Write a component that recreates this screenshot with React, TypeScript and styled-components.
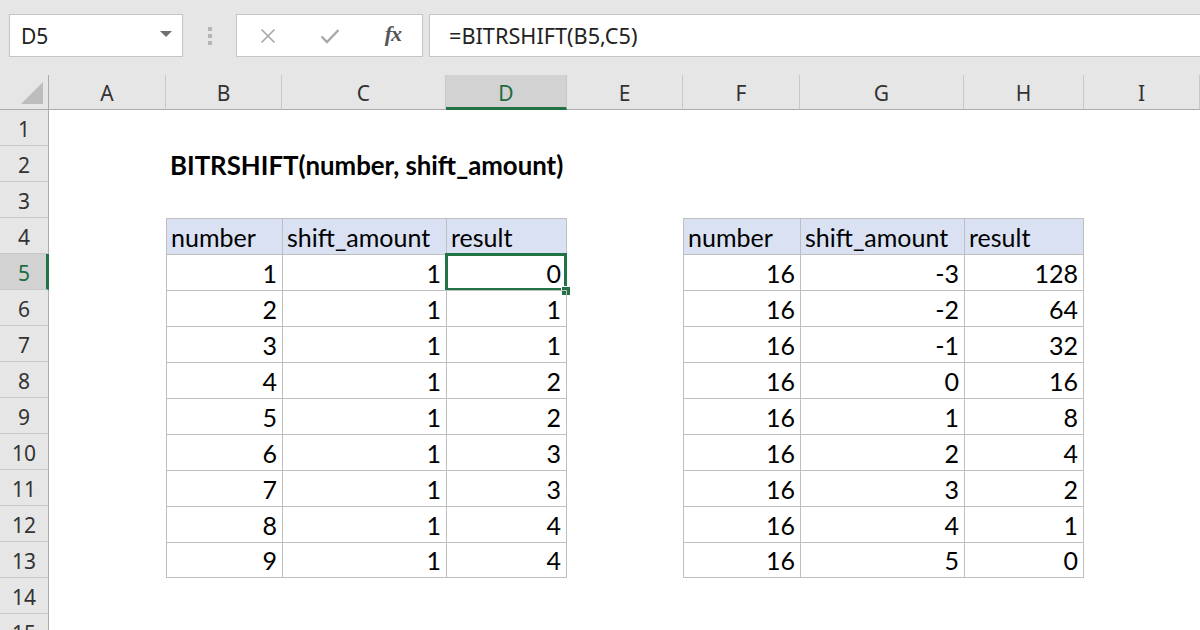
import React from "react";
import styled, { createGlobalStyle, css } from "styled-components";

const GlobalStyle = createGlobalStyle`
  html, body { margin: 0; padding: 0; background: #ffffff; overflow: hidden; }
  * { box-sizing: border-box; }
`;

const UI_FONT = `"Noto Sans", "Open Sans", sans-serif`;
const CELL_FONT = `Lato, "Liberation Sans", sans-serif`;
const GREEN = "#217346";
const TABLE_LINE = "#bfbfbf";

const Page = styled.div`
  width: 1200px;
  height: 630px;
  overflow: hidden;
  display: flex;
  flex-direction: column;
`;

const FormulaBar = styled.div`
  height: 75px;
  flex: none;
  background: #e6e6e6;
  display: flex;
  align-items: flex-start;
  padding: 14px 0 0 9px;
`;

const Box = styled.div`
  height: 43px;
  background: #ffffff;
  border: 1px solid #c6c6c6;
  display: flex;
  align-items: center;
`;

const NameBox = styled(Box)`
  width: 174px;
  padding: 0 10px 0 11px;
  justify-content: space-between;
  font-family: ${UI_FONT};
  font-size: 21px;
  color: #222;
`;

const Caret = styled.span`
  width: 0;
  height: 0;
  border-left: 6px solid transparent;
  border-right: 6px solid transparent;
  border-top: 6px solid #6f6f6f;
  margin-top: -4px;
`;

const Grip = styled.div`
  width: 53px;
  height: 43px;
  display: flex;
  flex-direction: column;
  align-items: center;
  justify-content: center;
  gap: 3px;
  span {
    width: 4px;
    height: 4px;
    background: #b4b4b4;
  }
`;

const FxButtons = styled(Box)`
  width: 187px;
  justify-content: space-between;
  padding: 0 21px 0 23px;
`;

const FxLabel = styled.span`
  font-family: "Liberation Serif", serif;
  font-style: italic;
  font-weight: bold;
  font-size: 22px;
  color: #555;
  letter-spacing: -1px;
  margin-top: -3px;
`;

const FormulaInput = styled(Box)`
  flex: 1;
  margin-left: 6px;
  margin-right: -4px;
  padding-left: 19px;
  font-family: ${UI_FONT};
  font-size: 21.7px;
  color: #222;
`;

const COLS = [49, 117, 116, 164, 121, 116, 117, 164, 120, 116];
const LETTERS = ["A", "B", "C", "D", "E", "F", "G", "H", "I"];

const Sheet = styled.div`
  display: grid;
  grid-template-columns: ${COLS.map((c) => `${c}px`).join(" ")};
  grid-template-rows: 35px repeat(15, 36px);
`;

const Corner = styled.div`
  background: #e6e6e6;
  border-right: 1px solid #ababab;
  border-bottom: 1px solid #ababab;
  position: relative;
  &::after {
    content: "";
    position: absolute;
    right: 5px;
    bottom: 5px;
    width: 0;
    height: 0;
    border-left: 22px solid transparent;
    border-bottom: 22px solid #bdbdbd;
  }
`;

const ColHeader = styled.div<{ $selected?: boolean }>`
  background: ${(p) => (p.$selected ? "#d2d2d2" : "#e6e6e6")};
  border-right: 1px solid #c8c8c8;
  border-bottom: ${(p) => (p.$selected ? `3px solid ${GREEN}` : "1px solid #ababab")};
  display: flex;
  align-items: center;
  justify-content: center;
  padding-top: ${(p) => (p.$selected ? "3px" : "1px")};
  font-family: ${UI_FONT};
  font-size: 21px;
  color: ${(p) => (p.$selected ? "#1e6b41" : "#333")};
`;

const RowHeader = styled.div<{ $selected?: boolean }>`
  background: ${(p) => (p.$selected ? "#d2d2d2" : "#e6e6e6")};
  border-bottom: 1px solid #c8c8c8;
  border-right: ${(p) => (p.$selected ? `3px solid ${GREEN}` : "1px solid #ababab")};
  display: flex;
  align-items: center;
  justify-content: center;
  padding-left: ${(p) => (p.$selected ? "2px" : "0")};
  padding-top: 3px;
  font-family: ${UI_FONT};
  font-size: 21px;
  color: ${(p) => (p.$selected ? "#1e6b41" : "#333")};
`;

type Kind = "empty" | "head" | "data";

const Cell = styled.div<{
  $kind: Kind;
  $last?: boolean;
  $bottom?: boolean;
}>`
  position: relative;
  display: flex;
  align-items: flex-end;
  padding: 0 5px 4px 5px;
  font-family: ${CELL_FONT};
  font-size: 25px;
  line-height: 1;
  color: #000;
  white-space: nowrap;
  ${(p) =>
    p.$kind !== "empty" &&
    css`
      border-top: 1px solid ${TABLE_LINE};
      border-left: 1px solid ${TABLE_LINE};
      ${p.$last && `border-right: 1px solid ${TABLE_LINE};`}
      ${p.$bottom && `border-bottom: 1px solid ${TABLE_LINE};`}
    `}
  ${(p) =>
    p.$kind === "head" &&
    css`
      background: #d9e1f2;
      justify-content: flex-start;
      padding-left: 4px;
    `}
  ${(p) =>
    p.$kind === "data" &&
    css`
      justify-content: flex-end;
    `}
`;

const Title = styled.div`
  grid-column: span 3;
  display: flex;
  align-items: flex-end;
  padding: 0 0 3px 4px;
  font-family: ${CELL_FONT};
  font-weight: bold;
  font-size: 25.8px;
  line-height: 1;
  color: #000;
  white-space: nowrap;
`;

const Selection = styled.div`
  position: absolute;
  top: -2px;
  left: -2px;
  right: -1px;
  bottom: -1px;
  border: 3px solid ${GREEN};
  pointer-events: none;
`;

const FillHandle = styled.div`
  position: absolute;
  right: -6px;
  bottom: -7px;
  width: 9px;
  height: 9px;
  background: ${GREEN};
  border-left: 1px solid #fff;
  border-top: 1px solid #fff;
`;

const t1Result = [0, 1, 1, 2, 2, 3, 3, 4, 4];
const t2Shift = [-3, -2, -1, 0, 1, 2, 3, 4, 5];
const t2Result = [128, 64, 32, 16, 8, 4, 2, 1, 0];

function cellContent(row: number, col: number): { kind: Kind; text?: string; last?: boolean; bottom?: boolean } {
  const inT1 = col >= 1 && col <= 3;
  const inT2 = col >= 5 && col <= 7;
  if ((inT1 || inT2) && row >= 4 && row <= 13) {
    const idx = inT1 ? col - 1 : col - 5;
    const last = idx === 2;
    const bottom = row === 13;
    if (row === 4) {
      return { kind: "head", text: ["number", "shift_amount", "result"][idx], last, bottom };
    }
    const i = row - 5;
    const text = inT1 ? String([i + 1, 1, t1Result[i]][idx]) : String([16, t2Shift[i], t2Result[i]][idx]);
    return { kind: "data", text, last, bottom };
  }
  return { kind: "empty" };
}

const XIcon = () => (
  <svg width="16" height="16" viewBox="0 0 16 16">
    <path d="M1.5 1.5 L14.5 14.5 M14.5 1.5 L1.5 14.5" stroke="#a8a8a8" strokeWidth="1.6" fill="none" />
  </svg>
);

const CheckIcon = () => (
  <svg width="20" height="16" viewBox="0 0 20 16">
    <path d="M1.5 8.5 L7 14 L18.5 2" stroke="#a8a8a8" strokeWidth="2.4" fill="none" />
  </svg>
);

export default function App() {
  const rows = Array.from({ length: 15 }, (_, i) => i + 1);
  return (
    <Page>
      <GlobalStyle />
      <FormulaBar>
        <NameBox>
          <span>D5</span>
          <Caret />
        </NameBox>
        <Grip>
          <span />
          <span />
          <span />
        </Grip>
        <FxButtons>
          <XIcon />
          <CheckIcon />
          <FxLabel>fx</FxLabel>
        </FxButtons>
        <FormulaInput>=BITRSHIFT(B5,C5)</FormulaInput>
      </FormulaBar>
      <Sheet>
        <Corner />
        {LETTERS.map((l) => (
          <ColHeader key={l} $selected={l === "D"}>
            {l}
          </ColHeader>
        ))}
        {rows.map((r) => (
          <React.Fragment key={r}>
            <RowHeader $selected={r === 5}>{r}</RowHeader>
            {r === 2 ? (
              <>
                <Cell $kind="empty" />
                <Title>BITRSHIFT(number, shift_amount)</Title>
                {[4, 5, 6, 7, 8].map((c) => (
                  <Cell key={c} $kind="empty" />
                ))}
              </>
            ) : (
              LETTERS.map((_, c) => {
                const info = cellContent(r, c);
                return (
                  <Cell key={c} $kind={info.kind} $last={info.last} $bottom={info.bottom}>
                    {info.text}
                    {r === 5 && c === 3 && (
                      <Selection>
                        <FillHandle />
                      </Selection>
                    )}
                  </Cell>
                );
              })
            )}
          </React.Fragment>
        ))}
      </Sheet>
    </Page>
  );
}
